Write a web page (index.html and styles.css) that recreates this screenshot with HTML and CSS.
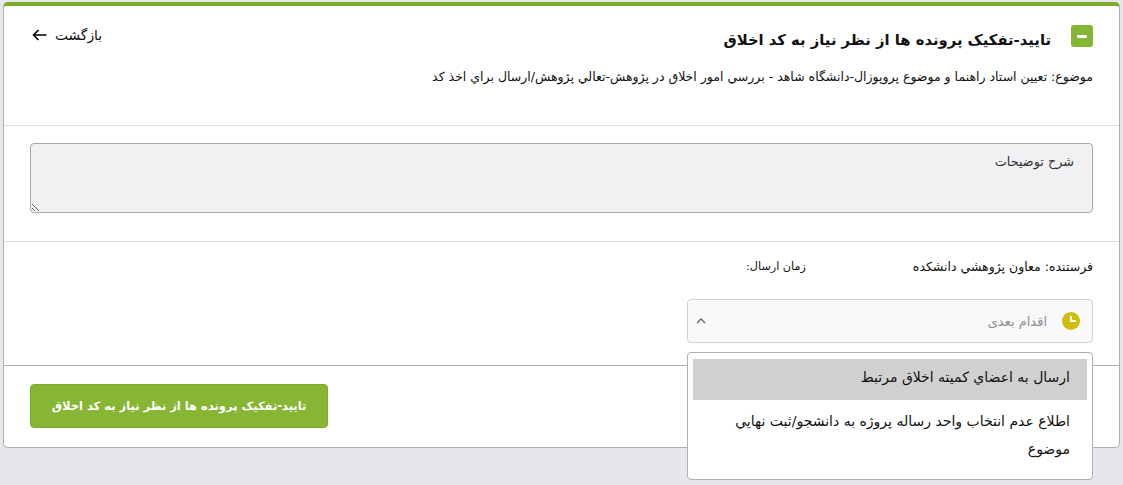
FILE: index.html
```html
<!DOCTYPE html>
<html lang="fa" dir="rtl">
<head>
    <meta charset="UTF-8">
    <meta name="viewport" content="width=device-width, initial-scale=1.0">
    <title>تایید-تفکیک پرونده ها</title>
    <link rel="stylesheet" href="styles.css">
</head>
<body>
    <div class="card">
        <div class="section head">
            <div class="head-top">
                <div class="title-wrap">
                    <span class="collapse"><span class="minus"></span></span>
                    <h1>تایید-تفکیک پرونده ها از نظر نیاز به کد اخلاق</h1>
                </div>
                <a class="back" href="#">
                    بازگشت
                    <svg width="15" height="12" viewBox="0 0 15 12"><path d="M14.5 6H1.5M6.5 1L1.5 6l5 5" fill="none" stroke="#000" stroke-width="1.6"/></svg>
                </a>
            </div>
            <p class="subject">موضوع: تعيين استاد راهنما و موضوع پروپوزال-دانشگاه شاهد - بررسي امور اخلاق در پژوهش-تعالي پژوهش/ارسال براي اخذ كد</p>
        </div>

        <div class="section notes">
            <textarea class="desc" placeholder="شرح توضیحات"></textarea>
        </div>

        <div class="section sender">
            <div class="sender-row">
                <span class="sender-name">فرستنده: معاون پژوهشي دانشكده</span>
                <span class="sent-time">زمان ارسال:</span>
            </div>
            <div class="picker">
                <div class="picker-box">
                    <span class="clock"><span class="hand"></span></span>
                    <span class="picker-label">اقدام بعدی</span>
                    <svg class="chevron" width="10" height="6" viewBox="0 0 10 6"><path d="M1 5l4-4 4 4" fill="none" stroke="#666" stroke-width="1.4"/></svg>
                </div>
                <ul class="menu">
                    <li class="selected">ارسال به اعضاي كميته اخلاق مرتبط</li>
                    <li>اطلاع عدم انتخاب واحد رساله پروژه به دانشجو/ثبت نهايي موضوع</li>
                </ul>
            </div>
        </div>

        <div class="section foot">
            <button class="submit">تایید-تفکیک پرونده ها از نظر نیاز به کد اخلاق</button>
        </div>
    </div>
</body>
</html>
```

FILE: styles.css
```css
* {
    box-sizing: border-box;
}
body {
    font-family: "DejaVu Sans", "Noto Sans", sans-serif;
    margin: 0;
    min-height: 100vh;
    padding: 2px 3px 0 3px;
    background-color: #e6e6ec;
    color: #111;
    font-size: 12.5px;
}
.card {
    height: 446px;
    background: white;
    border: 1px solid #b0b0b4;
    border-top: 4px solid #7cac2a;
    border-radius: 5px;
}
.section {
    padding: 0 26px;
}
.head {
    height: 120px;
    padding-top: 19px;
    border-bottom: 1px solid #dcdcdf;
}
.head-top {
    display: flex;
    justify-content: space-between;
    align-items: flex-start;
}
.title-wrap {
    display: flex;
    align-items: flex-start;
    gap: 20px;
}
.collapse {
    width: 22px;
    height: 22px;
    display: flex;
    align-items: center;
    justify-content: center;
    background: #85b534;
    border-radius: 3px;
}
.minus {
    width: 10px;
    height: 3px;
    background: white;
    border-radius: 1px;
}
h1 {
    margin: 0;
    font-size: 14.8px;
    line-height: 30px;
    font-weight: bold;
    color: #111;
}
.back {
    display: flex;
    align-items: center;
    gap: 8px;
    margin-top: 2px;
    margin-left: 2px;
    color: #111;
    font-size: 13.8px;
    text-decoration: none;
}
.subject {
    margin: 12px 0 0;
    line-height: 20px;
}
.notes {
    height: 116px;
    padding-top: 17px;
    border-bottom: 1px solid #dcdcdf;
}
.desc {
    display: block;
    width: 100%;
    height: 70px;
    padding: 10px 18px;
    background: #f1f1f4;
    border: 1px solid #a8a8ae;
    border-radius: 4px;
    font-family: inherit;
    font-size: 12.8px;
}
.desc::placeholder {
    color: #333;
    opacity: 1;
}
.sender {
    height: 124px;
    padding-top: 16px;
    border-bottom: 1px solid #b0b0b4;
}
.sender-row {
    display: flex;
    gap: 107px;
    line-height: 18px;
}
.sent-time {
    font-size: 11.2px;
}
.picker {
    position: relative;
    width: 406px;
    margin-top: 23px;
}
.picker-box {
    height: 44px;
    display: flex;
    align-items: center;
    padding: 0 12px;
    background: #f9f9fb;
    border: 1px solid #d4d4d8;
    border-radius: 4px;
}
.clock {
    position: relative;
    width: 18px;
    height: 18px;
    background: #d1bd0c;
    border-radius: 50%;
}
.hand {
    position: absolute;
    top: 4px;
    left: 8px;
    width: 6px;
    height: 6px;
    border-left: 2px solid white;
    border-bottom: 2px solid white;
}
.picker-label {
    margin-right: 15px;
    font-size: 13px;
    color: #8e8e8e;
}
.chevron {
    margin-right: auto;
    margin-left: -4px;
}
.menu {
    position: absolute;
    top: 53px;
    left: 0;
    right: 0;
    margin: 0;
    padding: 6px 5px 9px;
    list-style: none;
    background: white;
    border: 1px solid #b0b0b4;
    border-radius: 4px;
    font-size: 14px;
}
.menu li {
    padding: 4px 17px 7px 17px;
    line-height: 28px;
}
.menu .selected {
    height: 41px;
    padding-top: 4px;
    margin-bottom: 3px;
    background: #d0d0d0;
}
.foot {
    padding-top: 18px;
    direction: ltr;
}
.submit {
    display: block;
    width: 298px;
    height: 44px;
    padding: 0;
    background-color: #86b633;
    color: white;
    border: 1px solid #7cac2a;
    border-radius: 4px;
    font-family: inherit;
    font-size: 11.5px;
    font-weight: bold;
    direction: rtl;
}
```
